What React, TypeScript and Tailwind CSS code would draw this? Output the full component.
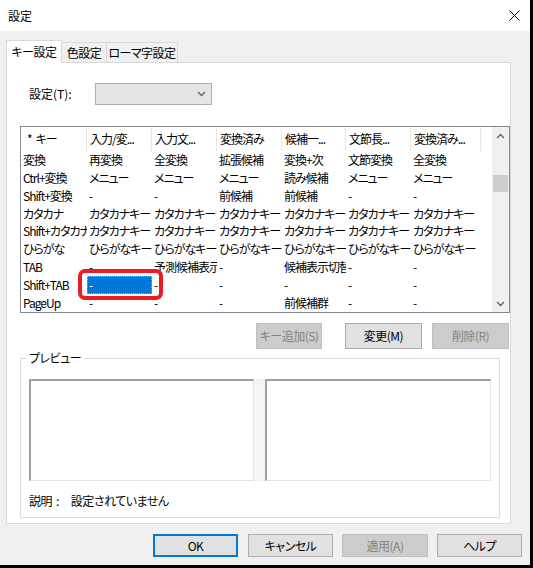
import React from "react";

const headers = ["* キー", "入力/変...", "入力文...", "変換済み", "候補一...", "文節長...", "変換済み..."];
const widths = [66, 65, 65, 65, 64, 65, 70];
const rows: string[][] = [
  ["変換", "再変換", "全変換", "拡張候補", "変換+次", "文節変換", "全変換"],
  ["Ctrl+変換", "メニュー", "メニュー", "メニュー", "読み候補", "メニュー", "メニュー"],
  ["Shift+変換", "-", "-", "前候補", "前候補", "-", "-"],
  ["カタカナ", "カタカナキー", "カタカナキー", "カタカナキー", "カタカナキー", "カタカナキー", "カタカナキー"],
  ["Shift+カタカナ", "カタカナキー", "カタカナキー", "カタカナキー", "カタカナキー", "カタカナキー", "カタカナキー"],
  ["ひらがな", "ひらがなキー", "ひらがなキー", "ひらがなキー", "ひらがなキー", "ひらがなキー", "ひらがなキー"],
  ["TAB", "-", "予測候補表示", "-", "候補表示切替", "-", "-"],
  ["Shift+TAB", "-", "-", "-", "-", "-", "-"],
  ["PageUp", "-", "-", "-", "前候補群", "-", "-"],
];

function Chevron({ up }: { up?: boolean }) {
  return (
    <svg width="9" height="6" viewBox="0 0 9 6">
      <path
        d={up ? "M1 5L4.5 1.5L8 5" : "M1 1L4.5 4.5L8 1"}
        fill="none"
        stroke="#606060"
        strokeWidth="1.3"
      />
    </svg>
  );
}

export default function App() {
  return (
    <div className="w-[533px] h-[568px] bg-black font-['Noto_Sans_CJK_JP',sans-serif] text-[12px] leading-[16px] text-black [font-feature-settings:'palt'] whitespace-nowrap">
      <div className="w-[530px] h-[565px] bg-[#f0f0f0] flex flex-col">
        {/* title bar */}
        <div className="h-[31px] bg-white flex items-center justify-between pl-[8px] pr-[10px]">
          <span>設定</span>
          <svg width="11" height="11" viewBox="0 0 11 11">
            <path d="M0.5 0.5L10.5 10.5M10.5 0.5L0.5 10.5" stroke="#000" strokeWidth="1" />
          </svg>
        </div>

        <div className="pt-[9px] pl-[6px]">
          {/* tabs */}
          <div className="flex items-end h-[22px] tracking-[-0.5px]">
            <div className="relative z-10 -mb-px w-[56px] h-[23px] bg-white border-l border-t border-r border-[#d9d9d9] flex items-center justify-center">
              キー設定
            </div>
            <div className="w-[45px] h-[20px] border-t border-r border-[#d9d9d9] flex items-center justify-center">
              色設定
            </div>
            <div className="w-[71px] h-[20px] border-t border-r border-[#d9d9d9] flex items-center justify-center">
              ローマ字設定
            </div>
          </div>

          {/* panel */}
          <div className="w-[505px] h-[462px] bg-white border border-[#d9d9d9] pl-[13px] pt-[20px] flex flex-col">
            {/* combo row */}
            <div className="h-[22px] flex items-center">
              <span className="ml-[9px] w-[66px]">設定(T):</span>
              <div className="w-[117px] h-[22px] bg-[#e5e5e5] border border-[#adadad] flex items-center justify-end pr-[5px]">
                <Chevron />
              </div>
            </div>

            {/* list view */}
            <div className="relative mt-[21px] w-[490px] h-[187px] border border-[#828790] flex">
              <div className="w-[471px] flex flex-col tracking-[-1px]">
                <div className="h-[24px] flex">
                  {headers.map((h, i) => (
                    <div
                      key={i}
                      style={{ width: widths[i] }}
                      className={`h-full flex items-center overflow-hidden border-r border-[#e5e5e5] ${
                        i === 0 ? "pl-[6px]" : "pl-[3px]"
                      }`}
                    >
                      {i === 0 ? (
                        <>
                          <span>*</span>
                          <span className="ml-[4px]">キー</span>
                        </>
                      ) : (
                        h
                      )}
                    </div>
                  ))}
                </div>
                {rows.map((r, ri) => (
                  <div key={ri} className="h-[18px] flex">
                    {r.map((c, ci) => {
                      const sel = ri === 7 && ci === 1;
                      return (
                        <div
                          key={ci}
                          style={{ width: widths[ci] }}
                          className={`h-full flex items-center overflow-hidden pl-[2px] ${
                            sel
                              ? "bg-[#0078d7] text-white outline-1 outline-dotted outline-[#e8a33d] -outline-offset-1"
                              : ""
                          }`}
                        >
                          {c}
                        </div>
                      );
                    })}
                  </div>
                ))}
              </div>
              {/* scrollbar */}
              <div className="w-[17px] h-full bg-[#f0f0f0] flex flex-col">
                <div className="h-[17px] flex items-center justify-center">
                  <Chevron up />
                </div>
                <div className="mt-[31px] mx-[1px] h-[17px] bg-[#cdcdcd]" />
                <div className="flex-1" />
                <div className="h-[17px] flex items-center justify-center">
                  <Chevron />
                </div>
              </div>
              {/* red highlight */}
              <div className="absolute left-[57px] top-[142px] w-[85px] h-[31px] border-[4px] border-[#ed1c24] rounded-[7px]" />
            </div>

            {/* buttons row */}
            <div className="mt-[10px] h-[26px] w-[490px] flex justify-end pr-[1px] tracking-[-0.5px]">
              <div className="w-[66px] h-full bg-[#cccccc] border border-[#bfbfbf] text-[#838383] flex items-center justify-center">
                キー追加(S)
              </div>
              <div className="ml-[23px] w-[77px] h-full bg-[#e1e1e1] border border-[#adadad] flex items-center justify-center">
                変更(M)
              </div>
              <div className="ml-[10px] w-[77px] h-full bg-[#cccccc] border border-[#bfbfbf] text-[#838383] flex items-center justify-center">
                削除(R)
              </div>
            </div>

            {/* preview group */}
            <div className="relative mt-[9px] w-[480px] h-[160px] border border-[#dcdcdc] pt-[20px] pl-[8px]">
              <span className="absolute -top-[9px] left-[5px] bg-white px-[3px] tracking-[-0.5px]">プレビュー</span>
              <div className="flex">
                <div className="w-[225px] h-[102px] bg-white border-t-2 border-l-2 border-[#a0a0a0] border-r border-b border-r-[#e3e3e3] border-b-[#e3e3e3]" />
                <div className="w-[11px] h-[102px] bg-[#f4f4f4]" />
                <div className="w-[226px] h-[102px] bg-white border-t-2 border-l-2 border-[#a0a0a0] border-r border-b border-r-[#e3e3e3] border-b-[#e3e3e3]" />
              </div>
              <div className="mt-[12px] flex tracking-[-0.5px]">
                <span>説明</span>
                <span className="ml-[4px]">:</span>
                <span className="ml-[12px]">設定されていません</span>
              </div>
            </div>
          </div>
        </div>

        {/* bottom buttons */}
        <div className="mt-[10px] h-[23px] flex pl-[153px] tracking-[-0.5px]">
          <div className="w-[85px] h-full bg-[#e1e1e1] border-2 border-[#0078d7] flex items-center justify-center">
            OK
          </div>
          <div className="ml-[10px] w-[85px] h-full bg-[#e1e1e1] border border-[#adadad] flex items-center justify-center">
            キャンセル
          </div>
          <div className="ml-[9px] w-[86px] h-full bg-[#cccccc] border border-[#bfbfbf] text-[#838383] flex items-center justify-center">
            適用(A)
          </div>
          <div className="ml-[9px] w-[85px] h-full bg-[#e1e1e1] border border-[#adadad] flex items-center justify-center">
            ヘルプ
          </div>
        </div>
      </div>
    </div>
  );
}
